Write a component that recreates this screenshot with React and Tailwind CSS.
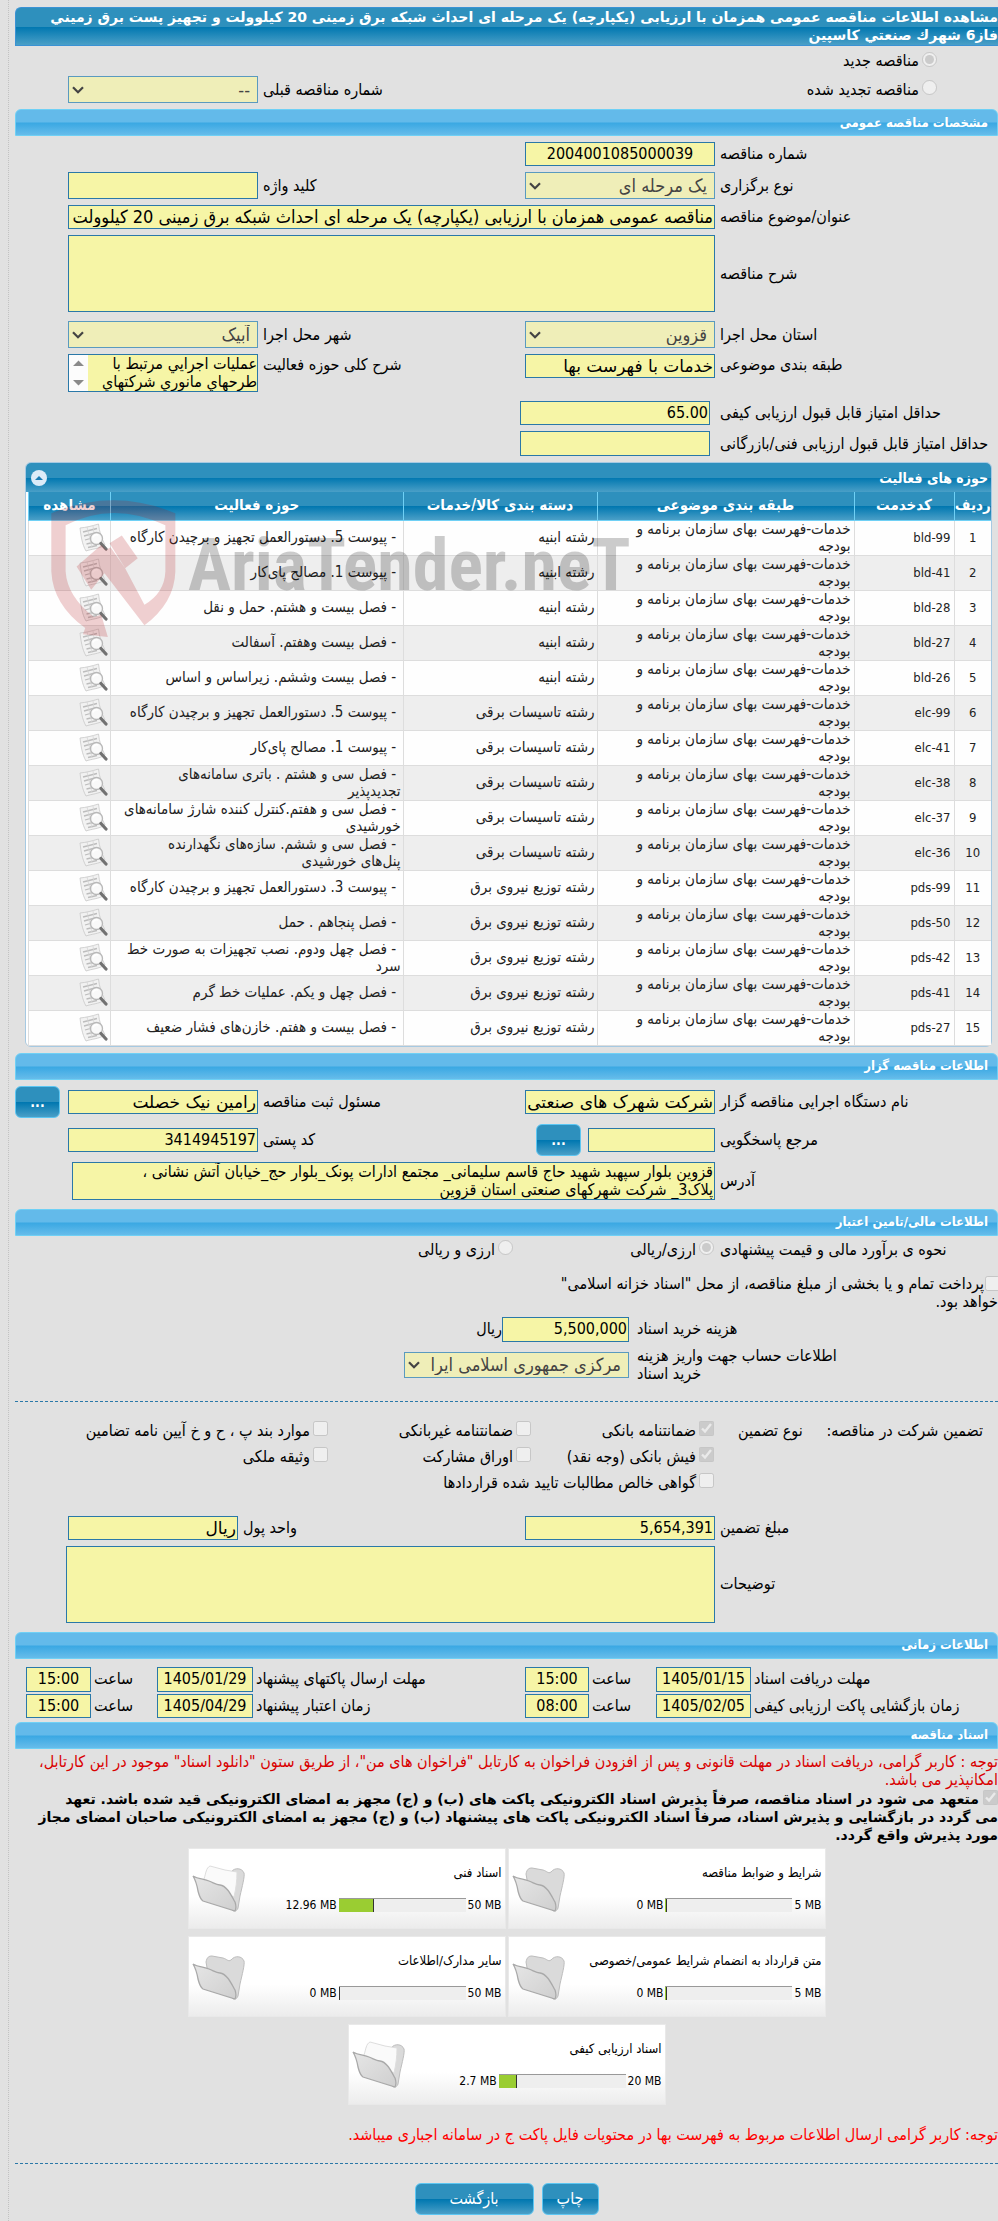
import React from "react";

const activities = [
  { code: "bld-99", group: "رشته ابنیه", title: "پیوست 5. دستورالعمل تجهیز و برچیدن کارگاه" },
  { code: "bld-41", group: "رشته ابنیه", title: "پیوست 1. مصالح پای‌کار" },
  { code: "bld-28", group: "رشته ابنیه", title: "فصل بیست و هشتم. حمل و نقل" },
  { code: "bld-27", group: "رشته ابنیه", title: "فصل بیست وهفتم. آسفالت" },
  { code: "bld-26", group: "رشته ابنیه", title: "فصل بیست وششم. زیراساس و اساس" },
  { code: "elc-99", group: "رشته تاسیسات برقی", title: "پیوست 5. دستورالعمل تجهیز و برچیدن کارگاه" },
  { code: "elc-41", group: "رشته تاسیسات برقی", title: "پیوست 1. مصالح پای‌کار" },
  { code: "elc-38", group: "رشته تاسیسات برقی", title: "فصل سی و هشتم . باتری سامانه‌های تجدیدپذیر" },
  { code: "elc-37", group: "رشته تاسیسات برقی", title: "فصل سی و هفتم.کنترل کننده شارژ سامانه‌های خورشیدی" },
  { code: "elc-36", group: "رشته تاسیسات برقی", title: "فصل سی و ششم. سازه‌های نگهدارنده پنل‌های\u00a0خورشیدی" },
  { code: "pds-99", group: "رشته توزیع نیروی برق", title: "پیوست 3. دستورالعمل تجهیز و برچیدن کارگاه" },
  { code: "pds-50", group: "رشته توزیع نیروی برق", title: "فصل پنجاهم . حمل" },
  { code: "pds-42", group: "رشته توزیع نیروی برق", title: "فصل چهل ودوم. نصب تجهیزات به صورت خط سرد" },
  { code: "pds-41", group: "رشته توزیع نیروی برق", title: "فصل چهل و یکم. عملیات خط گرم" },
  { code: "pds-27", group: "رشته توزیع نیروی برق", title: "فصل بیست و هفتم. خازن‌های فشار ضعیف" },
];

const documents = [
  { title: "شرایط و ضوابط مناقصه", used: 0, max: 5 },
  { title: "اسناد فنی", used: 12.96, max: 50 },
  { title: "متن قرارداد به انضمام شرایط عمومی/خصوصی", used: 0, max: 5 },
  { title: "سایر مدارک/اطلاعات", used: 0, max: 50 },
  { title: "اسناد ارزیابی کیفی", used: 2.7, max: 20 },
];

const boxClass = "block w-full min-w-0 bg-[#f6f5a6] border border-[#2a78a8] text-black leading-5 px-px outline-none rounded-none";
const inputClass = `${boxClass} text-[16px]`;
const wordInputClass = `${boxClass} text-[17px] font-['DejaVu_Sans',sans-serif]`;
const darkBar = "bg-[linear-gradient(#2e90bd_0%,#2e90bd_50%,#0077b0_51%,#4a9fc7_100%)]";
const rowClass = "grid grid-cols-[283fr_190fr_267fr_190fr_53fr]";

const SectionBar = ({ children, className = "" }) => (
  <h2
    className={`h-[27px] flex items-center pr-[9px] rounded-t-[6px] border border-[#6fd0f5] bg-[linear-gradient(#63baea_0%,#63baea_48%,#3aa8e3_52%,#66bcea_100%)] text-white font-bold text-[13px] ${className}`}
  >
    {children}
  </h2>
);

const Label = ({ htmlFor, children, className = "pl-[5px]" }) => (
  <label htmlFor={htmlFor} className={`flex items-center justify-end whitespace-nowrap ${className}`}>
    {children}
  </label>
);

const Select = ({ id, value, className = "" }) => (
  <div className={`relative min-w-0 ${className}`}>
    <select
      id={id}
      disabled
      className="block w-full h-full appearance-none bg-[#efeeb8] border border-[#5a9abf] text-[#444] text-[18px] leading-5 pr-[7px] pl-[18px] opacity-100 rounded-none"
    >
      <option>{value}</option>
    </select>
    <svg viewBox="0 0 12 8" className="absolute left-1 top-1/2 -mt-1 w-3 h-2" fill="none" stroke="#444" strokeWidth="2.2">
      <path d="M1 1.2 L6 6.2 L11 1.2" />
    </svg>
  </div>
);

const Choice = ({ id, type, checked, name, children, className = "" }) => (
  <div className={`flex items-center whitespace-nowrap ${className}`}>
    <input
      id={id}
      type={type}
      name={name}
      disabled
      defaultChecked={checked}
      className="w-[15px] h-[15px] shrink-0 ml-[3px] mb-1"
    />
    <label htmlFor={id}>{children}</label>
  </div>
);

const DarkButton = ({ children, className = "" }) => (
  <button
    type="button"
    className={`h-8 shrink-0 rounded-[6px] border border-[#5cc6f2] text-white ${darkBar} ${className}`}
  >
    {children}
  </button>
);

const ViewIcon = () => (
  <svg viewBox="0 0 30 29" className="w-[30px] h-[29px]">
    <path d="M2 5 C8 4.500 14 3 20.500 1 C21 8 24 16 27 22 C21 26 13 26 8 28 C4 21 3 13 2 5 Z" fill="#f2f2f2" stroke="#c8c8c8" strokeWidth=".8" />
    <path d="M5 9 L19 5.500 M6 13 L15 10.500 M7 17 L14 15 M8.500 21 L15 19.500 M10 24.500 L19 22.500" stroke="#bdbdbd" strokeWidth="1.300" fill="none" />
    <path d="M9 4 L14 25 M15 3 L16 10" stroke="#d6d6d6" strokeWidth=".8" fill="none" />
    <circle cx="18.500" cy="15.500" r="6" fill="#fafafa" fillOpacity=".8" stroke="#b8b8b8" strokeWidth="1.300" />
    <path d="M15 14.500 C16 12 18 11.500 20 12" stroke="#fff" strokeWidth="1.500" fill="none" />
    <path d="M23 20.500 L28 26" stroke="#727272" strokeWidth="3.200" strokeLinecap="round" />
  </svg>
);

const Folder = ({ full }) => (
  <svg viewBox="0 0 54 48" className="w-[54px] h-12">
    <defs>
      <linearGradient id="folderFront" x1="0" y1="0" x2="1" y2="1">
        <stop offset="0" stopColor="#e6e6e6" />
        <stop offset="1" stopColor="#cfcfcf" />
      </linearGradient>
    </defs>
    <path
      d="M14 9 C15 4 17 3 20 3 L31 5 C35 6 36 9 39 7 C43 2 50 3 52 8 C53 11 50 22 48 31 L46 43 C45 46 43 46 41 46 L16 20 Z"
      fill="#dadada"
      stroke="#bdbdbd"
      strokeWidth="1"
    />
    {full && (
      <path d="M12 14 C14 8 14 3 18 1 L33 5 L45 7 C45 16 44 23 42 32 L20 22 Z" fill="#fafafa" stroke="#dedede" strokeWidth="1" />
    )}
    <path
      d="M1 11 C6 14 12 14 17 16 C22 18 24 20 28 20 C35 21 39 30 43 37 C44 40 44 44 43 46 L11 36 C8 34 7 30 6 26 C5 20 4 16 1 11 Z"
      fill="url(#folderFront)"
      stroke="#a9a9a9"
      strokeWidth="1.300"
    />
  </svg>
);

const DocumentCard = ({ doc }) => (
  <div className="relative w-[318px] h-[81px] border border-[#e9e9e9] bg-[linear-gradient(#ffffff_60%,#ececec_100%)] pr-[3px] pt-4 whitespace-nowrap">
    <p className="text-[13px] leading-4">{doc.title}</p>
    <div className="flex items-center mt-4 gap-[2px] text-[12px] leading-4">
      <span dir="ltr">{doc.max} MB</span>
      <div dir="ltr" className="w-[127px] h-[14px] bg-[#eeeeee] border-t border-[#999]">
        <div
          className="h-full bg-[#9acd32] border-r border-[#333]"
          style={{ width: `${Math.max((doc.used / doc.max) * 106, 1)}%` }}
        />
      </div>
      <span dir="ltr">{doc.used} MB</span>
    </div>
    <div className="absolute left-[3px] top-4">
      <Folder full={doc.used > 0} />
    </div>
  </div>
);

const Watermark = () => (
  <div dir="ltr" className="absolute left-[25px] top-[37px] flex pointer-events-none">
    <svg viewBox="0 0 374 412" className="w-[125px] h-[137px]" fill="#b5121b" fillOpacity=".2">
      <path d="M0 40 Q186 -38 373 40 V215 Q370 310 280 377 L160 220 L120 270 L76 200 L150 135 L165 150 L178 142 L222 205 L280 315 Q340 280 343 215 V76 Q186 2 43 76 V215 Q48 290 128 352 L150 345 L170 412 L95 404 L102 385 Q5 315 0 215 Z" />
      <path d="M175 130 L212 107 L260 175 L222 205 Z" />
    </svg>
    <span className="ml-3 mt-4 text-[72px] leading-[100px] font-bold text-black/20 font-['Roboto_Condensed','Liberation_Sans_Narrow','Liberation_Sans',sans-serif]">
      AriaTender.neT
    </span>
  </div>
);

const ActivityTable = () => (
  <div className="relative mt-[6px] ml-[10px] mr-[6px] border border-[#a6c9e2] rounded-[6px]">
    <div className={`h-[29px] flex items-center justify-between pr-[3px] pl-[5px] rounded-t-[5px] text-white ${darkBar}`}>
      <h3 className="font-bold text-[14px]">حوزه های فعالیت</h3>
      <button type="button" className="w-4 h-4 rounded-full bg-[#dcebf8] flex items-center justify-center" aria-label="بستن">
        <svg viewBox="0 0 8 4" className="w-2 h-1" fill="#1c7cb4">
          <path d="M0 4 L4 0 L8 4 Z" />
        </svg>
      </button>
    </div>
    <div className="pl-[2px] rounded-b-[5px] bg-white">
      <table className="w-full table-fixed border-collapse text-[15px] leading-[17px] text-[#222]">
        <colgroup>
          <col className="w-[37px]" />
          <col className="w-[100px]" />
          <col className="w-[257px]" />
          <col className="w-[194px]" />
          <col />
          <col className="w-[82px]" />
        </colgroup>
        <thead>
          <tr className={`h-7 text-white ${darkBar}`}>
            {["ردیف", "کدخدمت", "طبقه بندی موضوعی", "دسته بندی کالا/خدمات", "حوزه فعالیت", "مشاهده"].map((head) => (
              <th key={head} className="font-bold border-l border-b border-[#6fd0f5] whitespace-nowrap">
                {head}
              </th>
            ))}
          </tr>
        </thead>
        <tbody>
          {activities.map((item, index) => (
            <tr key={item.code} className="h-[35px] odd:bg-[#fefefe] even:bg-[#eeeeee]">
              <td className="border-l border-b border-[#ddd] text-center text-[13px]">{index + 1}</td>
              <td className="border-l border-b border-[#ddd] pr-[3px] text-[13px]">
                <span dir="ltr">{item.code}</span>
              </td>
              <td className="border-l border-b border-[#ddd] pr-[3px] pl-5">خدمات-فهرست بهای سازمان برنامه و بودجه</td>
              <td className="border-l border-b border-[#ddd] pr-[2px]">{item.group}</td>
              <td className="border-l border-b border-[#ddd] pr-[2px] pl-[11px]">{"\u00a0- " + item.title}</td>
              <td className="border-l border-b border-[#ddd] pr-[2px]">
                <button type="button" className="block" aria-label="مشاهده">
                  <ViewIcon />
                </button>
              </td>
            </tr>
          ))}
        </tbody>
      </table>
    </div>
    <Watermark />
  </div>
);

const App = () => {
  return (
    <div dir="rtl" className="overflow-x-hidden bg-[#e1e1e1] text-black text-[16px] leading-[18px] font-['DejaVu_Sans_Condensed','DejaVu_Sans',sans-serif]">
      <div className="ml-2 pl-[6px] border-l border-dotted border-[#c2c2c2] pt-[7px] pb-[6px]">
        <h1 className={`rounded-tl-[6px] border border-[#3a92d4] border-r-0 text-white font-bold text-[14px] leading-[18px] h-[39px] font-['DejaVu_Sans',sans-serif] ${darkBar}`}>
          مشاهده اطلاعات مناقصه عمومی همزمان با ارزیابی (یکپارچه) یک مرحله ای احداث شبکه برق زمینی 20 کیلوولت و تجهیز پست برق زميني فاز6 شهرك صنعتي كاسپين
        </h1>

        <div className="h-[30px] flex items-center pr-[61px]">
          <Choice id="newTender" type="radio" name="tenderKind" checked>مناقصه جدید</Choice>
        </div>
        <div className={`${rowClass} h-[27px]`}>
          <div className="col-span-2 flex items-center pr-[61px]">
            <Choice id="renewedTender" type="radio" name="tenderKind">مناقصه تجدید شده</Choice>
          </div>
          <Label htmlFor="prevNumber">شماره مناقصه قبلی</Label>
          <Select id="prevNumber" value="--" />
        </div>

        <SectionBar className="mt-[6px]">مشخصات مناقصه عمومی</SectionBar>

        <div className={`${rowClass} h-6 mt-[6px]`}>
          <Label htmlFor="number">شماره مناقصه</Label>
          <input id="number" readOnly value="2004001085000039" className={`${inputClass} text-center`} />
        </div>
        <div className={`${rowClass} h-[27px] mt-[6px]`}>
          <Label htmlFor="stage">نوع برگزاری</Label>
          <Select id="stage" value="یک مرحله ای" />
          <Label htmlFor="keyword">کلید واژه</Label>
          <input id="keyword" readOnly value="" className={inputClass} />
        </div>
        <div className={`${rowClass} h-6 mt-[6px]`}>
          <Label htmlFor="subject">عنوان/موضوع مناقصه</Label>
          <input
            id="subject"
            readOnly
            value="مناقصه عمومی همزمان با ارزیابی (یکپارچه) یک مرحله ای احداث شبکه برق زمینی 20 کیلوولت و تجهیز پست برق زميني فاز6 شهرك صنعتي كاسپين"
            className={`${boxClass} text-[18px] col-span-3`}
          />
        </div>
        <div className={`${rowClass} h-[77px] mt-[6px]`}>
          <Label htmlFor="description">شرح مناقصه</Label>
          <textarea id="description" readOnly value="" className={`${inputClass} col-span-3 resize-none`} />
        </div>
        <div className={`${rowClass} h-[27px] mt-[9px]`}>
          <Label htmlFor="province">استان محل اجرا</Label>
          <Select id="province" value="قزوین" />
          <Label htmlFor="city">شهر محل اجرا</Label>
          <Select id="city" value="آبیک" />
        </div>
        <div className={`${rowClass} items-start mt-[6px]`}>
          <Label htmlFor="category" className="pl-[5px] h-[22px]">طبقه بندی موضوعی</Label>
          <input id="category" readOnly value="خدمات با فهرست بها" className={`${wordInputClass} h-6`} />
          <Label htmlFor="scope" className="pl-[5px] h-[22px]">شرح کلی حوزه فعالیت</Label>
          <div className="flex h-[38px] border border-[#2a78a8]">
            <textarea
              id="scope"
              readOnly
              value="عمليات اجرايي مرتبط با طرحهاي مانوري شركتهاي"
              className="flex-1 min-w-0 bg-[#f6f5a6] resize-none overflow-hidden outline-none text-[16px] leading-[18px]"
            />
            <svg viewBox="0 0 19 36" className="w-[19px] h-9 bg-[#fcfcfc]" fill="#8a8a8a">
              <path d="M4 11 L9.500 5.500 L15 11 Z M4 25 L9.500 30.500 L15 25 Z" />
            </svg>
          </div>
        </div>
        <div className="grid grid-cols-[288fr_190fr_505fr] h-6 mt-[9px]">
          <Label htmlFor="qualityScore" className="pl-[10px]">حداقل امتیاز قابل قبول ارزیابی کیفی</Label>
          <input id="qualityScore" readOnly value="65.00" className={inputClass} />
        </div>
        <div className="grid grid-cols-[288fr_190fr_505fr] h-[25px] mt-[6px]">
          <Label htmlFor="techScore" className="pl-[10px]">حداقل امتیاز قابل قبول ارزیابی فنی/بازرگانی</Label>
          <input id="techScore" readOnly value="" className={inputClass} />
        </div>

        <ActivityTable />

        <SectionBar className="mt-[6px]">اطلاعات مناقصه گزار</SectionBar>

        <div className={`${rowClass} items-center h-8 mt-[6px]`}>
          <Label htmlFor="org">نام دستگاه اجرایی مناقصه گزار</Label>
          <input id="org" readOnly value="شرکت شهرک های صنعتی" className={`${wordInputClass} h-6`} />
          <Label htmlFor="registrar">مسئول ثبت مناقصه</Label>
          <input id="registrar" readOnly value="رامین نیک خصلت" className={`${wordInputClass} h-6`} />
          <div className="flex justify-end">
            <DarkButton className="w-[45px] font-bold text-[14px]">...</DarkButton>
          </div>
        </div>
        <div className={`${rowClass} items-center h-8 mt-[6px]`}>
          <Label htmlFor="contact">مرجع پاسخگویی</Label>
          <div className="flex items-center gap-[7px]">
            <input id="contact" readOnly value="" className={`${inputClass} h-6 max-w-[127px]`} />
            <DarkButton className="w-[45px] font-bold text-[14px]">...</DarkButton>
          </div>
          <Label htmlFor="postal">کد پستی</Label>
          <input id="postal" readOnly value="3414945197" className={`${inputClass} h-6`} />
        </div>
        <div className="grid grid-cols-[283fr_643fr_57fr] mt-[6px]">
          <Label htmlFor="address">آدرس</Label>
          <textarea
            id="address"
            readOnly
            value="قزوین بلوار سپهبد شهید حاج قاسم سلیمانی_ مجتمع ادارات پونک_بلوار حج_خیابان آتش نشانی ، پلاک3_ شرکت شهرکهای صنعتی استان قزوین"
            className="block w-full h-[38px] bg-[#f6f5a6] border border-[#2a78a8] resize-none overflow-hidden outline-none pr-px pl-8 text-[16px] leading-[18px]"
          />
        </div>

        <SectionBar className="mt-[9px]">اطلاعات مالی/تامین اعتبار</SectionBar>

        <div className="grid grid-cols-[284fr_201fr_498fr] h-7">
          <div className="flex items-center justify-end pl-[6px]">نحوه ی برآورد مالی و قیمت پیشنهادی</div>
          <Choice id="currencyOne" type="radio" name="currency" checked>ارزی/ریالی</Choice>
          <Choice id="currencyBoth" type="radio" name="currency">ارزی و ریالی</Choice>
        </div>
        <div className="mt-[11px] w-[460px]">
          <input id="treasury" type="checkbox" disabled className="w-[15px] h-[15px] -mr-[2px] ml-px align-text-bottom mb-[2px]" />
          <label htmlFor="treasury">پرداخت تمام و یا بخشی از مبلغ مناقصه، از محل "اسناد خزانه اسلامی" خواهد بود.</label>
        </div>
        <div className="grid grid-cols-[369fr_127fr_487fr] h-[25px] mt-[6px]">
          <Label htmlFor="price" className="pl-2">هزینه خرید اسناد</Label>
          <input id="price" readOnly value="5,500,000" className={inputClass} />
          <span className="flex items-center">ریال</span>
        </div>
        <div className="grid grid-cols-[369fr_225fr_389fr] items-center mt-[5px]">
          <Label htmlFor="account" className="pl-2 text-left">
            اطلاعات حساب جهت واریز هزینه
            <br />
            خرید اسناد
          </Label>
          <Select id="account" value="مرکزی جمهوری اسلامی ایرا" className="h-[26px]" />
        </div>

        <hr className="mt-[18px] border-0 border-t border-dashed border-[#2a78a8]" />

        <div className="grid grid-cols-[284fr_183fr_203fr_313fr] auto-rows-[26px] mt-4">
          <div className="flex items-center justify-between pr-[15px] pl-6">
            <span>تضمین شرکت در مناقصه:</span>
            <span>نوع تضمین</span>
          </div>
          <Choice id="bankGuarantee" type="checkbox" checked>ضمانتنامه بانکی</Choice>
          <Choice id="nonBank" type="checkbox">ضمانتنامه غیربانکی</Choice>
          <Choice id="bylaw" type="checkbox">موارد بند پ ، ح و خ آیین نامه تضامین</Choice>
          <span />
          <Choice id="cash" type="checkbox" checked>فیش بانکی (وجه نقد)</Choice>
          <Choice id="bonds" type="checkbox">اوراق مشارکت</Choice>
          <Choice id="estate" type="checkbox">وثیقه ملکی</Choice>
          <span />
          <Choice id="claims" type="checkbox" className="col-span-3">گواهی خالص مطالبات تایید شده قراردادها</Choice>
        </div>

        <div className={`${rowClass} h-6 mt-5`}>
          <Label htmlFor="amount">مبلغ تضمین</Label>
          <input id="amount" readOnly value="5,654,391" className={inputClass} />
          <div className="col-span-2 grid grid-cols-[287fr_170fr]">
            <Label htmlFor="unit">واحد پول</Label>
            <input id="unit" readOnly value="ریال" className={wordInputClass} />
          </div>
        </div>
        <div className="grid grid-cols-[283fr_649fr_51fr] h-[77px] mt-[6px]">
          <Label htmlFor="notes">توضیحات</Label>
          <textarea id="notes" readOnly value="" className={`${inputClass} resize-none`} />
        </div>

        <SectionBar className="mt-[9px]">اطلاعات زمانی</SectionBar>

        <div className="grid grid-cols-[247fr_95fr_67fr_64fr_272fr_96fr_66fr_65fr_11fr] grid-rows-[25px_24px] gap-y-[2px] mt-2">
          <Label htmlFor="docDate" className="pl-[3px]">مهلت دریافت اسناد</Label>
          <input id="docDate" readOnly value="1405/01/15" className={`${inputClass} text-center`} />
          <Label htmlFor="docTime" className="pl-[3px]">ساعت</Label>
          <input id="docTime" readOnly value="15:00" className={`${inputClass} text-center`} />
          <Label htmlFor="sendDate" className="pl-[3px]">مهلت ارسال پاکتهای پیشنهاد</Label>
          <input id="sendDate" readOnly value="1405/01/29" className={`${inputClass} text-center`} />
          <Label htmlFor="sendTime" className="pl-[3px]">ساعت</Label>
          <input id="sendTime" readOnly value="15:00" className={`${inputClass} text-center`} />
          <span />
          <Label htmlFor="openDate" className="pl-[3px]">زمان بازگشایی پاکت ارزیابی کیفی</Label>
          <input id="openDate" readOnly value="1405/02/05" className={`${inputClass} text-center`} />
          <Label htmlFor="openTime" className="pl-[3px]">ساعت</Label>
          <input id="openTime" readOnly value="08:00" className={`${inputClass} text-center`} />
          <Label htmlFor="validDate" className="pl-[3px]">زمان اعتبار پیشنهاد</Label>
          <input id="validDate" readOnly value="1405/04/29" className={`${inputClass} text-center`} />
          <Label htmlFor="validTime" className="pl-[3px]">ساعت</Label>
          <input id="validTime" readOnly value="15:00" className={`${inputClass} text-center`} />
        </div>

        <SectionBar className="mt-1">اسناد مناقصه</SectionBar>

        <p className="mt-1 text-[#d90000]">
          توجه : کاربر گرامی، دریافت اسناد در مهلت قانونی و پس از افزودن فراخوان به کارتابل "فراخوان های من"، از طریق ستون "دانلود اسناد" موجود در این کارتابل، امکانپذیر می باشد.
        </p>
        <div className="mt-px font-bold text-[14px] font-['DejaVu_Sans',sans-serif]">
          <input id="commit" type="checkbox" disabled defaultChecked className="w-[15px] h-[15px] ml-1 align-text-bottom mb-[2px]" />
          <label htmlFor="commit">
            متعهد می شود در اسناد مناقصه، صرفاً پذیرش اسناد الکترونیکی پاکت های (ب) و (ج) مجهز به امضای الکترونیکی قید شده باشد. تعهد می{"\u00a0"}گردد در بازگشایی و پذیرش اسناد، صرفاً اسناد الکترونیکی پاکت های پیشنهاد (ب) و (ج) مجهز به امضای الکترونیکی صاحبان امضای مجاز مورد پذیرش واقع گردد.
          </label>
        </div>

        <div className="mt-1 flex flex-wrap justify-center gap-x-[2px] gap-y-[7px] px-[160px]">
          {documents.map((doc) => (
            <DocumentCard key={doc.title} doc={doc} />
          ))}
        </div>

        <p className="mt-[21px] text-[#ff0000]">توجه: کاربر گرامی ارسال اطلاعات مربوط به فهرست بها در محتویات فایل پاکت ج در سامانه اجباری میباشد.</p>

        <hr className="mt-[19px] border-0 border-t border-dashed border-[#2a78a8]" />

        <div className="flex justify-center gap-2 mt-[19px]">
          <DarkButton className="w-[57px]">چاپ</DarkButton>
          <DarkButton className="w-[119px]">بازگشت</DarkButton>
        </div>
      </div>
    </div>
  );
};

export default App;
